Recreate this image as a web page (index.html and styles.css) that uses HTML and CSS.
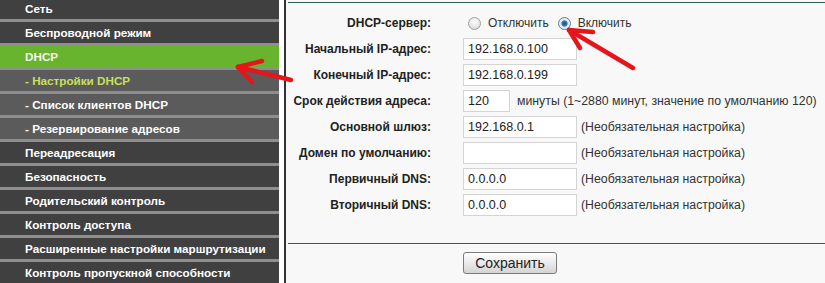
FILE: index.html
```html
<!DOCTYPE html>
<html lang="ru">
<head>
    <meta charset="UTF-8">
    <title>DHCP</title>
    <link rel="stylesheet" href="styles.css">
</head>
<body>
    <div class="page">
        <ul class="menu">
            <li class="item">Сеть</li>
            <li class="item">Беспроводной режим</li>
            <li class="item active">DHCP</li>
            <li class="item sub current">- Настройки DHCP</li>
            <li class="item sub">- Список клиентов DHCP</li>
            <li class="item sub">- Резервирование адресов</li>
            <li class="item">Переадресация</li>
            <li class="item">Безопасность</li>
            <li class="item">Родительский контроль</li>
            <li class="item">Контроль доступа</li>
            <li class="item">Расширенные настройки маршрутизации</li>
            <li class="item">Контроль пропускной способности</li>
        </ul>

        <div class="divider"></div>

        <div class="main">
            <div class="rule"></div>
            <div class="form">
                <div class="label">DHCP-сервер:</div>
                <div class="field">
                    <span class="radio"></span><span class="opt">Отключить</span>
                    <span class="radio checked"></span><span class="opt">Включить</span>
                </div>

                <div class="label">Начальный IP-адрес:</div>
                <div class="field"><span class="input">192.168.0.100</span></div>

                <div class="label">Конечный IP-адрес:</div>
                <div class="field"><span class="input">192.168.0.199</span></div>

                <div class="label">Срок действия адреса:</div>
                <div class="field"><span class="input short">120</span><span class="note">минуты (1~2880 минут, значение по умолчанию 120)</span></div>

                <div class="label">Основной шлюз:</div>
                <div class="field"><span class="input">192.168.0.1</span><span class="note">(Необязательная настройка)</span></div>

                <div class="label">Домен по умолчанию:</div>
                <div class="field"><span class="input"></span><span class="note">(Необязательная настройка)</span></div>

                <div class="label">Первичный DNS:</div>
                <div class="field"><span class="input">0.0.0.0</span><span class="note">(Необязательная настройка)</span></div>

                <div class="label">Вторичный DNS:</div>
                <div class="field"><span class="input">0.0.0.0</span><span class="note">(Необязательная настройка)</span></div>
            </div>
            <div class="rule bottom"></div>
            <div class="actions">
                <button class="save">Сохранить</button>
            </div>
        </div>
    </div>

    <!-- annotation arrows drawn over the screenshot -->
    <svg class="arrows" width="825" height="283" viewBox="0 0 825 283">
        <g stroke="#e4151b" stroke-width="4.5" stroke-linecap="round" fill="none">
            <path d="M291 80 L238 67"/>
            <path d="M238 67 L262 61"/>
            <path d="M238 67 L252 82"/>
            <path d="M633 68 L569 30"/>
            <path d="M569 30 L593 32"/>
            <path d="M569 30 L580 48"/>
        </g>
    </svg>
</body>
</html>
```

FILE: styles.css
```css
body {
    margin: 0;
    font-family: "Liberation Sans", Arial, sans-serif;
    background-color: #fff;
    overflow: hidden;
}
.page {
    display: flex;
    height: 283px;
}
.menu {
    list-style: none;
    margin: 0;
    padding: 0;
    width: 279px;
    background-color: #8e8e8e;
}
.item {
    height: 21px;
    line-height: 21px;
    margin-bottom: 3px;
    padding-left: 25px;
    font-size: 11.7px;
    font-weight: bold;
    color: #fff;
    background-color: #404040;
    white-space: nowrap;
}
.item:first-child {
    height: 19px;
    line-height: 17px;
}
.item.active {
    background-color: #69b42e;
    color: #f4f8ea;
}
.item.sub {
    background-color: #5b5b5b;
}
.item.current {
    color: #c8e05a;
}
.divider {
    width: 2px;
    margin-left: 5px;
    background-color: #333;
}
.main {
    flex: 1;
    padding-left: 2px;
    background-color: #f8f8f8;
}
.rule {
    height: 1px;
    margin-top: 2px;
    background-color: #2f5d4e;
}
.rule.bottom {
    margin-top: 25px;
}
.form {
    display: grid;
    grid-template-columns: 143px 1fr;
    grid-auto-rows: 26px;
    column-gap: 32px;
    margin-top: 7px;
}
.label {
    display: flex;
    align-items: center;
    justify-content: flex-end;
    font-size: 12px;
    font-weight: bold;
    color: #222;
    white-space: nowrap;
}
.field {
    display: flex;
    align-items: center;
    font-size: 12px;
    color: #333;
    white-space: nowrap;
}
.input {
    box-sizing: border-box;
    width: 114px;
    height: 22px;
    line-height: 20px;
    padding-left: 4px;
    font-size: 12.5px;
    color: #222;
    background-color: #fff;
    border: 1px solid #d4d4d4;
}
.input.short {
    width: 47px;
}
.note {
    margin-left: 4px;
    font-size: 12.3px;
    color: #333;
}
.input.short + .note {
    margin-left: 7px;
}
.radio {
    box-sizing: border-box;
    width: 13px;
    height: 13px;
    margin-left: 5px;
    border-radius: 50%;
    border: 1px solid #9aa1a8;
    background: radial-gradient(circle at 50% 35%, #fff 0%, #e4e4e4 60%, #c9c9c9 100%);
}
.radio.checked {
    margin-left: 9px;
    border-color: #5a7fa4;
    background: radial-gradient(circle, #1d4f86 0%, #3a79b8 35%, #dfe8f0 45%, #eef2f6 100%);
}
.opt {
    margin-left: 7px;
    font-size: 12px;
}
.actions {
    padding: 8px 0 0 175px;
}
.save {
    box-sizing: border-box;
    width: 94px;
    height: 22px;
    padding: 0;
    font-family: "Liberation Sans", Arial, sans-serif;
    font-size: 14px;
    color: #222;
    background: linear-gradient(#fefefe, #e6e6e6 60%, #d4d4d4);
    border: 1px solid #7b7b7b;
    border-radius: 3px;
}
.arrows {
    position: absolute;
    left: 0;
    top: 0;
    pointer-events: none;
}
```
